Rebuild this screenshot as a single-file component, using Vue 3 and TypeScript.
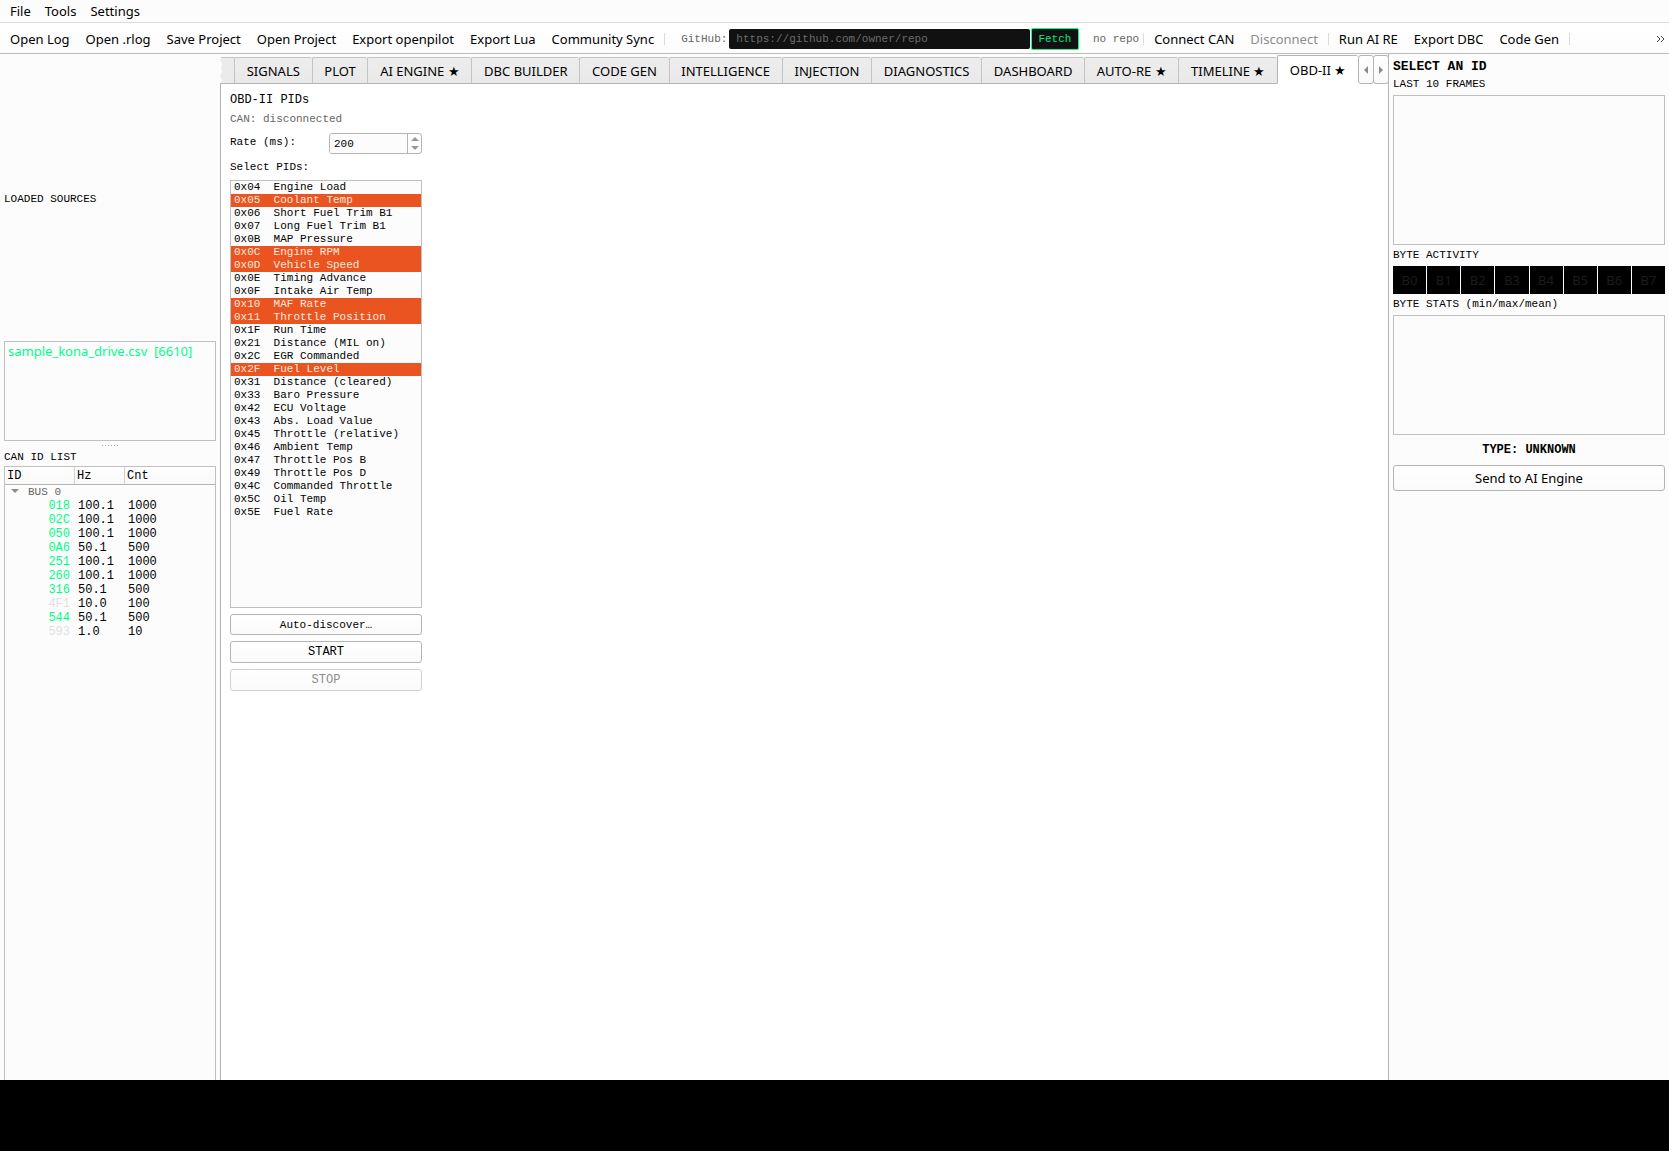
<script setup lang="ts">
import { ref } from 'vue'

interface Pid { code: string; name: string }
interface CanRow { id: string; hz: string; count: number; idle?: boolean }

const menus = ['File', 'Tools', 'Settings']
const fileActions = ['Open Log', 'Open .rlog', 'Save Project', 'Open Project', 'Export openpilot', 'Export Lua', 'Community Sync']
const aiActions = ['Run AI RE', 'Export DBC', 'Code Gen']
const tabs = ['SIGNALS', 'PLOT', 'AI ENGINE ★', 'DBC BUILDER', 'CODE GEN', 'INTELLIGENCE', 'INJECTION', 'DIAGNOSTICS', 'DASHBOARD', 'AUTO-RE ★', 'TIMELINE ★', 'OBD-II ★']
const activeTab = ref('OBD-II ★')
const repoUrl = ref('')
const rate = ref(200)

const pids: Pid[] = [
  { code: '0x04', name: 'Engine Load' },
  { code: '0x05', name: 'Coolant Temp' },
  { code: '0x06', name: 'Short Fuel Trim B1' },
  { code: '0x07', name: 'Long Fuel Trim B1' },
  { code: '0x0B', name: 'MAP Pressure' },
  { code: '0x0C', name: 'Engine RPM' },
  { code: '0x0D', name: 'Vehicle Speed' },
  { code: '0x0E', name: 'Timing Advance' },
  { code: '0x0F', name: 'Intake Air Temp' },
  { code: '0x10', name: 'MAF Rate' },
  { code: '0x11', name: 'Throttle Position' },
  { code: '0x1F', name: 'Run Time' },
  { code: '0x21', name: 'Distance (MIL on)' },
  { code: '0x2C', name: 'EGR Commanded' },
  { code: '0x2F', name: 'Fuel Level' },
  { code: '0x31', name: 'Distance (cleared)' },
  { code: '0x33', name: 'Baro Pressure' },
  { code: '0x42', name: 'ECU Voltage' },
  { code: '0x43', name: 'Abs. Load Value' },
  { code: '0x45', name: 'Throttle (relative)' },
  { code: '0x46', name: 'Ambient Temp' },
  { code: '0x47', name: 'Throttle Pos B' },
  { code: '0x49', name: 'Throttle Pos D' },
  { code: '0x4C', name: 'Commanded Throttle' },
  { code: '0x5C', name: 'Oil Temp' },
  { code: '0x5E', name: 'Fuel Rate' },
]
const selectedPids = ref(['0x05', '0x0C', '0x0D', '0x10', '0x11', '0x2F'])

const canRows: CanRow[] = [
  { id: '018', hz: '100.1', count: 1000 },
  { id: '02C', hz: '100.1', count: 1000 },
  { id: '050', hz: '100.1', count: 1000 },
  { id: '0A6', hz: '50.1', count: 500 },
  { id: '251', hz: '100.1', count: 1000 },
  { id: '260', hz: '100.1', count: 1000 },
  { id: '316', hz: '50.1', count: 500 },
  { id: '4F1', hz: '10.0', count: 100, idle: true },
  { id: '544', hz: '50.1', count: 500 },
  { id: '593', hz: '1.0', count: 10, idle: true },
]
const byteLabels = ['B0', 'B1', 'B2', 'B3', 'B4', 'B5', 'B6', 'B7']
</script>

<template>
  <div class="window">
    <nav class="menubar">
      <button v-for="m in menus" :key="m" type="button">{{ m }}</button>
    </nav>

    <div class="toolbar">
      <div class="group actions">
        <button v-for="a in fileActions" :key="a" type="button">{{ a }}</button>
      </div>
      <span class="sep"></span>
      <div class="group github">
        <label for="repo">GitHub:</label>
        <input id="repo" v-model="repoUrl" type="text" placeholder="https://github.com/owner/repo">
        <button type="button" class="fetch">Fetch</button>
        <span class="repo-state">no repo</span>
      </div>
      <span class="sep"></span>
      <div class="group actions">
        <button type="button">Connect CAN</button>
        <button type="button" disabled>Disconnect</button>
      </div>
      <span class="sep"></span>
      <div class="group actions">
        <button v-for="a in aiActions" :key="a" type="button">{{ a }}</button>
      </div>
      <span class="sep"></span>
      <button type="button" class="more" aria-label="More actions">
        <svg width="9" height="8" viewBox="0 0 9 8"><path d="M1 1l3 3-3 3M5 1l3 3-3 3" fill="none" stroke="#444" /></svg>
      </button>
    </div>

    <div class="body">
      <aside class="left">
        <h2 class="caption sources-title">LOADED SOURCES</h2>
        <ul class="sources">
          <li>sample_kona_drive.csv&nbsp; [6610]</li>
        </ul>
        <div class="grip"><span></span></div>
        <h2 class="caption">CAN ID LIST</h2>
        <div class="tree">
          <table>
            <colgroup><col class="c-id"><col class="c-hz"><col></colgroup>
            <thead>
              <tr><th>ID</th><th>Hz</th><th>Cnt</th></tr>
            </thead>
            <tbody>
              <tr class="bus">
                <td colspan="3">
                  <svg width="8" height="4" viewBox="0 0 8 4"><path d="M0 0h8L4 4z" fill="#8c8c8c" /></svg>BUS 0
                </td>
              </tr>
              <tr v-for="r in canRows" :key="r.id">
                <td class="id" :class="{ idle: r.idle }">{{ r.id }}</td>
                <td>{{ r.hz }}</td>
                <td>{{ r.count }}</td>
              </tr>
            </tbody>
          </table>
        </div>
      </aside>

      <main class="center">
        <div class="tabbar">
          <svg class="torn" width="14" height="27" viewBox="0 0 14 27">
            <path d="M0 0H14V27H0L2 23 0 19 2 15 1 11 2 7 0 3 2 1z" fill="#ebebeb" />
            <path d="M1 .5H14" stroke="#c3c3c3" />
            <path d="M0 26.5H14" stroke="#b4b4b4" />
          </svg>
          <div class="tabs" role="tablist">
            <button v-for="t in tabs" :key="t" type="button" role="tab" :class="{ active: t === activeTab }" :aria-selected="t === activeTab" @click="activeTab = t">{{ t }}</button>
          </div>
          <div class="scrollers">
            <button type="button" aria-label="Scroll tabs left"><svg width="4" height="8" viewBox="0 0 4 8"><path d="M4 0v8L0 4z" fill="#8c8c8c" /></svg></button>
            <button type="button" aria-label="Scroll tabs right"><svg width="4" height="8" viewBox="0 0 4 8"><path d="M0 0v8l4-4z" fill="#8c8c8c" /></svg></button>
          </div>
        </div>

        <section class="page">
          <div class="controls">
            <h1>OBD-II PIDs</h1>
            <p class="status">CAN: disconnected</p>
            <div class="rate">
              <label for="rate">Rate (ms):</label>
              <div class="spin">
                <input id="rate" v-model.number="rate" type="number">
                <div class="steps">
                  <button type="button" aria-label="Increase" @click="rate++"><svg width="8" height="4" viewBox="0 0 8 4"><path d="M0 4h8L4 0z" fill="#999" /></svg></button>
                  <button type="button" aria-label="Decrease" @click="rate--"><svg width="8" height="4" viewBox="0 0 8 4"><path d="M0 0h8L4 4z" fill="#999" /></svg></button>
                </div>
              </div>
            </div>
            <label class="select-label" for="pids">Select PIDs:</label>
            <select id="pids" v-model="selectedPids" multiple>
              <option v-for="p in pids" :key="p.code" :value="p.code">{{ p.code }}&nbsp;&nbsp;{{ p.name }}</option>
            </select>
            <button type="button" class="btn small">Auto-discover…</button>
            <button type="button" class="btn">START</button>
            <button type="button" class="btn" disabled>STOP</button>
          </div>
        </section>
      </main>

      <aside class="right">
        <h2 class="selected">SELECT AN ID</h2>
        <h3 class="caption">LAST 10 FRAMES</h3>
        <div class="box frames"></div>
        <h3 class="caption activity">BYTE ACTIVITY</h3>
        <div class="bytes">
          <span v-for="b in byteLabels" :key="b">{{ b }}</span>
        </div>
        <h3 class="caption activity">BYTE STATS (min/max/mean)</h3>
        <div class="box stats"></div>
        <p class="type">TYPE: UNKNOWN</p>
        <button type="button" class="btn send">Send to AI Engine</button>
      </aside>
    </div>

    <footer class="blank"></footer>
  </div>
</template>

<style>
body {
  margin: 0;
}
</style>

<style scoped>
.window {
  --sans: "Noto Sans", sans-serif;
  --mono: "Liberation Mono", monospace;
  --line: #c0c0c0;
  --frame: #b4b4b4;
  display: flex;
  flex-direction: column;
  height: 100vh;
  background: #fcfcfc;
  color: #000;
  font: 13px/18px var(--sans);
}
.window * {
  box-sizing: border-box;
}
h1, h2, h3, p, ul {
  margin: 0;
  padding: 0;
  list-style: none;
  font-weight: normal;
}
button {
  padding: 0;
  border: 0;
  background: none;
  color: inherit;
  font: inherit;
  white-space: nowrap;
}
svg {
  display: block;
}

.menubar {
  display: flex;
  gap: 14px;
  height: 23px;
  padding: 0 10px;
  border-bottom: 1px solid #dcdcdc;
}
.toolbar {
  display: flex;
  align-items: center;
  height: 31px;
  padding: 2px 4px 0 10px;
  border-bottom: 1px solid #bcbcbc;
  background: linear-gradient(#fff, #fcfcfc);
}
.group {
  display: flex;
  align-items: center;
}
.actions {
  gap: 16px;
}
.actions button:disabled {
  color: #8c8c8c;
}
.sep {
  width: 1px;
  height: 12px;
  margin: 0 10px;
  background: #dcdcdc;
}
.github {
  flex: 1;
  margin-left: 6px;
  margin-right: -6px;
  color: #666;
  font: 11px/16px var(--mono);
}
.github input {
  flex: 1;
  min-width: 0;
  height: 20px;
  margin: 0 1px 0 2px;
  padding: 0 7px;
  border: 0;
  border-radius: 2px;
  background: #111;
  color: #ddd;
  font: inherit;
}
.github input::placeholder {
  color: #6c6c6c;
  opacity: 1;
}
.fetch {
  width: 48px;
  height: 22px;
  border: 1px solid #00ff88;
  border-radius: 2px;
  background: #111;
  color: #00e87c;
}
.repo-state {
  margin-left: 14px;
}
.more {
  margin-left: 76px;
}

.body {
  display: flex;
  flex: 1;
  min-height: 0;
}
.caption {
  font: 11px/14px var(--mono);
}
.left {
  display: flex;
  flex-direction: column;
  width: 220px;
  padding: 3px 4px 0;
}
.sources-title {
  display: flex;
  align-items: center;
  height: 284px;
}
.sources {
  height: 100px;
  padding: 0 3px;
  border: 1px solid var(--line);
  color: #00ff88;
  font-size: 13px;
  white-space: nowrap;
}
.grip {
  display: flex;
  justify-content: center;
  align-items: center;
  height: 9px;
}
.grip span {
  width: 17px;
  height: 1px;
  background: repeating-linear-gradient(90deg, #aaa 0 1px, transparent 1px 3px);
}
.tree {
  flex: 1;
  margin-top: 2px;
  border: 1px solid var(--line);
  border-bottom: 0;
}
table {
  width: 100%;
  border-spacing: 0;
  table-layout: fixed;
  font: 12px/14px var(--mono);
}
.c-id {
  width: 69px;
}
.c-hz {
  width: 50px;
}
th {
  height: 18px;
  padding: 0 2px;
  border-bottom: 1px solid var(--frame);
  background: linear-gradient(#fff, #f8f8f8);
  font-weight: normal;
  text-align: left;
}
th + th {
  border-left: 1px solid #d2d2d2;
}
td {
  height: 14px;
  padding: 0 4px;
}
td.id {
  color: #00ff88;
  text-align: right;
}
td.idle {
  color: #e0e0e0;
}
.bus td {
  padding: 0 6px;
  color: #666;
  font-size: 11px;
}
.bus svg {
  display: inline-block;
  margin-right: 9px;
  vertical-align: 2px;
}

.center {
  display: flex;
  flex: 1;
  flex-direction: column;
  min-width: 0;
}
.tabbar {
  display: flex;
  align-items: flex-end;
  height: 30px;
}
.torn {
  flex: none;
}
.tabs {
  display: flex;
  flex: 1;
  align-items: flex-end;
}
.tabs button {
  flex: 1 0 auto;
  height: 27px;
  padding: 0 8px;
  border: 1px solid #c3c3c3;
  border-width: 1px 0 1px 1px;
  border-bottom-color: var(--frame);
  border-radius: 2px 2px 0 0;
  background: linear-gradient(#ededed, #e9e9e9);
}
.tabs .active {
  height: 29px;
  border-color: var(--frame);
  border-bottom-color: #fff;
  background: #fff;
}
.scrollers {
  display: flex;
  align-self: flex-start;
  margin: 1px -1px 0 0;
}
.scrollers button {
  display: grid;
  place-items: center;
  width: 16px;
  height: 29px;
  border: 1px solid var(--frame);
  border-radius: 3px;
  background: linear-gradient(#fff, #fafafa);
}
.scrollers button + button {
  margin-left: -1px;
}
.page {
  flex: 1;
  min-height: 0;
  padding: 9px;
  border-left: 1px solid var(--frame);
  background: #fff;
}
.controls {
  display: flex;
  flex-direction: column;
  width: 192px;
  font: 11px/14px var(--mono);
}
h1 {
  font-size: 12px;
}
.status {
  margin-top: 5px;
  color: #666;
}
.rate {
  display: flex;
  justify-content: space-between;
  margin-top: 7px;
  line-height: 19px;
}
.spin {
  display: flex;
  width: 93px;
  height: 21px;
  border: 1px solid var(--frame);
  border-radius: 3px;
  overflow: hidden;
}
.spin input {
  flex: 1;
  min-width: 0;
  padding: 1px 4px 0;
  border: 0;
  background: #fcfcfc;
  font: inherit;
  appearance: textfield;
}
.spin input::-webkit-inner-spin-button {
  display: none;
}
.steps {
  display: flex;
  flex-direction: column;
  width: 14px;
  border-left: 1px solid var(--frame);
}
.steps button {
  display: grid;
  flex: 1;
  place-items: center;
}
.select-label {
  margin: 6px 0;
}
select {
  height: 428px;
  margin: 0;
  padding: 0;
  border: 1px solid var(--line);
  border-radius: 0;
  outline: 0;
  background: #fcfcfc;
  font: 11px/13px var(--mono);
  overflow: hidden;
}
option {
  height: 13px;
  min-height: 13px;
  padding: 0 3px;
  color: #000;
  font: 11px/13px var(--mono);
}
option:checked {
  background: linear-gradient(#e95420, #e95420);
  color: #ffe8df;
}
.btn {
  height: 22px;
  margin-top: 6px;
  border: 1px solid var(--frame);
  border-radius: 3px;
  background: linear-gradient(#fff, #fafafa);
  font-size: 12px;
}
.btn.small {
  height: 21px;
  font-size: 11px;
}
.btn:disabled {
  border-color: #d0d0d0;
  color: #8c8c8c;
}

.right {
  display: flex;
  flex-direction: column;
  width: 281px;
  padding: 5px 4px 0;
  border-left: 1px solid var(--frame);
}
.selected {
  font: bold 13px/16px var(--mono);
}
.right .caption {
  margin-top: 2px;
}
.box {
  border: 1px solid var(--line);
}
.frames {
  height: 150px;
  margin-top: 4px;
}
.right .activity {
  margin-top: 3px;
}
.bytes {
  display: flex;
  gap: 1px;
  margin-top: 4px;
}
.bytes span {
  flex: 1;
  height: 28px;
  background: #000;
  color: #1c1c1c;
  line-height: 28px;
  text-align: center;
}
.stats {
  height: 120px;
  margin-top: 4px;
}
.type {
  margin-top: 8px;
  font: bold 12px/14px var(--mono);
  text-align: center;
}
.right .send {
  height: 26px;
  margin-top: 8px;
  font-size: 13px;
}
.blank {
  height: 71px;
  background: #000;
}
</style>
